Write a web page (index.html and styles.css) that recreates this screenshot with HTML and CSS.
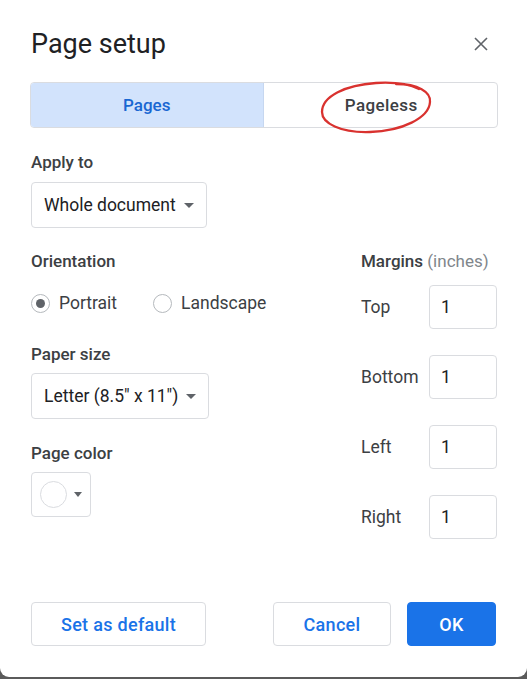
FILE: index.html
```html
<!DOCTYPE html>
<html>
<head>
<meta charset="utf-8">
<link rel="stylesheet" href="styles.css">
</head>
<body>
<div class="dialog">
  <div class="header">
    <h1 class="title">Page setup</h1>
    <button class="close" aria-label="Close">
      <svg width="14" height="14" viewBox="0 0 14 14"><path d="M1 1L13 13M13 1L1 13" stroke="#5f6368" stroke-width="1.6" fill="none"/></svg>
    </button>
  </div>

  <div class="segmented">
    <div class="seg seg-active">Pages</div>
    <div class="seg seg-pageless">Pageless</div>
    <svg class="annot" width="130" height="60" viewBox="0 0 130 60">
      <path d="M86 6 C 108 6, 121 14, 120 24 C 119 40, 92 53, 60 54 C 30 55, 12 45, 12 34 C 12 18, 36 7, 66 5 C 83 4, 99 6, 109 11" fill="none" stroke="#d9322f" stroke-width="2.3" stroke-linecap="round"/>
    </svg>
  </div>

  <div class="label apply-label">Apply to</div>
  <div class="select select-apply">Whole document<span class="caret"></span></div>

  <div class="cols">
    <div class="col-left">
      <div class="label">Orientation</div>
      <div class="radios">
        <label class="radio"><span class="dot checked"></span>Portrait</label>
        <label class="radio"><span class="dot"></span>Landscape</label>
      </div>
      <div class="label paper-label">Paper size</div>
      <div class="select select-paper">Letter (8.5" x 11")<span class="caret"></span></div>
      <div class="label color-label">Page color</div>
      <div class="color-btn"><span class="swatch"></span><span class="caret small"></span></div>
    </div>
    <div class="col-right">
      <div class="label">Margins <span class="muted">(inches)</span></div>
      <div class="mrows">
        <div class="mrow"><span class="mlabel">Top</span><div class="minput">1</div></div>
        <div class="mrow"><span class="mlabel">Bottom</span><div class="minput">1</div></div>
        <div class="mrow"><span class="mlabel">Left</span><div class="minput">1</div></div>
        <div class="mrow"><span class="mlabel">Right</span><div class="minput">1</div></div>
      </div>
    </div>
  </div>

  <div class="footer">
    <button class="btn btn-default">Set as default</button>
    <div class="spacer"></div>
    <button class="btn btn-cancel">Cancel</button>
    <button class="btn btn-ok">OK</button>
  </div>
</div>
</body>
</html>
```

FILE: styles.css
```css
* { box-sizing: border-box; }
html, body { margin: 0; padding: 0; }
body {
  background: #5b5b5b;
  font-family: Roboto, "Noto Sans", Arial, sans-serif;
  color: #3c4043;
  width: 527px;
  height: 679px;
  overflow: hidden;
}
.dialog {
  background: #fff;
  width: 527px;
  height: 677px;
  border-radius: 0 0 9px 9px;
  padding: 0 29px 0 30px;
  display: flex;
  flex-direction: column;
}
.header {
  display: flex;
  align-items: flex-start;
  justify-content: space-between;
  padding-top: 28px;
  margin-bottom: 22px;
}
.title {
  margin: 0 0 0 1px;
  font-size: 27px;
  line-height: 32px;
  font-weight: 400;
  color: #202124;
}
.close {
  border: 0;
  background: none;
  padding: 0;
  margin: 9px 10px 0 0;
  width: 14px;
  height: 14px;
  display: flex;
}
.segmented {
  position: relative;
  display: flex;
  height: 46px;
  border: 1px solid #dadce0;
  border-radius: 4px;
}
.seg {
  flex: 1;
  display: flex;
  align-items: center;
  justify-content: center;
  font-size: 17px;
  font-weight: 500;
  color: #3c4043;
}
.seg-pageless { letter-spacing: 0.4px; padding-left: 2px; }
.seg-active {
  background: #d2e3fc;
  color: #1967d2;
  border-right: 1px solid #c6d7f0;
  border-radius: 3px 0 0 3px;
}
.annot {
  position: absolute;
  left: 279px;
  top: -5px;
}
.label {
  font-size: 17px;
  font-weight: 500;
  line-height: 20px;
  color: #3c4043;
  margin-left: 1px;
}
.apply-label { margin-top: 24px; }
.select {
  display: inline-flex;
  align-self: flex-start;
  align-items: center;
  height: 46px;
  border: 1px solid #dadce0;
  border-radius: 4px;
  padding: 0 12px 0 12px;
  margin-left: 1px;
  font-size: 17.5px;
  color: #202124;
  margin-top: 9px;
}
.select-apply { margin-top: 10px; }
.caret {
  width: 0;
  height: 0;
  border-left: 5px solid transparent;
  border-right: 5px solid transparent;
  border-top: 5px solid #5f6368;
  margin-left: 8px;
}
.caret.small {
  border-left-width: 4.5px;
  border-right-width: 4.5px;
  border-top-width: 5px;
  margin-left: 7px;
}
.cols {
  display: flex;
  margin-top: 23px;
}
.col-left {
  display: flex;
  flex-direction: column;
  width: 330px;
}
.col-right {
  display: flex;
  flex-direction: column;
}
.radios {
  display: flex;
  margin-top: 22px;
  margin-left: 1px;
}
.radio {
  display: flex;
  align-items: center;
  font-size: 17.5px;
  color: #3c4043;
  height: 20px;
}
.radio + .radio { margin-left: 36px; }
.dot {
  width: 19px;
  height: 19px;
  border: 1px solid #b5b9bd;
  border-radius: 50%;
  margin-right: 9px;
  display: flex;
  align-items: center;
  justify-content: center;
}
.dot.checked::after {
  content: "";
  width: 9px;
  height: 9px;
  border-radius: 50%;
  background: #5f6368;
}
.paper-label { margin-top: 31px; }
.color-label { margin-top: 24px; }
.color-btn {
  margin-top: 9px;
  margin-left: 1px;
  width: 60px;
  height: 45px;
  border: 1px solid #dadce0;
  border-radius: 4px;
  display: flex;
  align-items: center;
  padding-left: 8px;
}
.swatch {
  width: 27px;
  height: 27px;
  border-radius: 50%;
  border: 1px solid #dadce0;
  background: #fff;
}
.muted { color: #80868b; font-weight: 400; }
.mrows {
  display: flex;
  flex-direction: column;
  gap: 26px;
  margin-top: 14px;
}
.mrow {
  display: flex;
  align-items: center;
}
.mlabel {
  width: 69px;
  font-size: 17.5px;
  color: #3c4043;
  padding-left: 1px;
}
.minput {
  width: 68px;
  height: 44px;
  border: 1px solid #dadce0;
  border-radius: 4px;
  display: flex;
  align-items: center;
  padding-left: 11px;
  font-size: 17.5px;
  color: #202124;
}
.footer {
  display: flex;
  align-items: center;
  margin-top: auto;
  margin-bottom: 31px;
  padding-right: 2px;
  padding-left: 1px;
}
.spacer { flex: 1; }
.btn {
  height: 44px;
  border-radius: 4px;
  font-family: inherit;
  font-size: 18px;
  letter-spacing: 0.3px;
  font-weight: 500;
  color: #1a73e8;
  background: #fff;
  border: 1px solid #dadce0;
  padding: 0;
}
.btn-default { width: 175px; }
.btn-cancel { width: 118px; margin-right: 16px; }
.btn-ok {
  width: 89px;
  background: #1a73e8;
  border-color: #1a73e8;
  color: #fff;
}
```
